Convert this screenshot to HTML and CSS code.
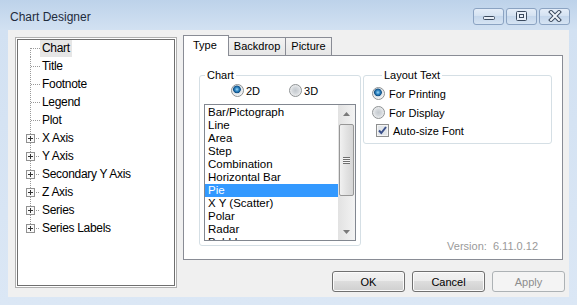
FILE: index.html
```html
<!DOCTYPE html>
<html lang="en">
<head>
    <meta charset="UTF-8">
    <title>Chart Designer</title>
    <link rel="stylesheet" href="styles.css">
</head>
<body>
<div class="window">
    <div class="titlebar">
        <span class="title">Chart Designer</span>
        <div class="caption-buttons">
            <span class="cap-btn">
                <svg width="14" height="12" viewBox="0 0 14 12"><rect x="1.5" y="6.5" width="11" height="3" rx="1" fill="#e8eff8" stroke="#3b4a5e"/></svg>
            </span>
            <span class="cap-btn">
                <svg width="14" height="12" viewBox="0 0 14 12"><rect x="1.5" y="1.5" width="10" height="9" rx="1" fill="#e8eff8" stroke="#3b4a5e"/><rect x="4.5" y="4.5" width="4" height="3" fill="none" stroke="#3b4a5e"/></svg>
            </span>
            <span class="cap-btn">
                <svg width="14" height="12" viewBox="0 0 14 12"><path d="M3 2 L11 10 M11 2 L3 10" stroke="#3b4a5e" stroke-width="4" stroke-linecap="square"/><path d="M3 2 L11 10 M11 2 L3 10" stroke="#eef3f9" stroke-width="2" stroke-linecap="square"/></svg>
            </span>
        </div>
    </div>

    <div class="client">
        <!-- Left: element tree -->
        <div class="tree">
            <div class="node first"><span class="gutter"><span class="tee"></span></span><span class="label selected">Chart</span></div>
            <div class="node"><span class="gutter"><span class="tee"></span></span><span class="label">Title</span></div>
            <div class="node"><span class="gutter"><span class="tee"></span></span><span class="label">Footnote</span></div>
            <div class="node"><span class="gutter"><span class="tee"></span></span><span class="label">Legend</span></div>
            <div class="node"><span class="gutter"><span class="tee"></span></span><span class="label">Plot</span></div>
            <div class="node"><span class="gutter"><svg class="plus" width="9" height="9" viewBox="0 0 9 9"><rect x="0.5" y="0.5" width="8" height="8" fill="#fafafa" stroke="#919191"/><path d="M2 4.5h5M4.5 2v5" stroke="#333"/></svg><span class="tee short"></span></span><span class="label">X Axis</span></div>
            <div class="node"><span class="gutter"><svg class="plus" width="9" height="9" viewBox="0 0 9 9"><rect x="0.5" y="0.5" width="8" height="8" fill="#fafafa" stroke="#919191"/><path d="M2 4.5h5M4.5 2v5" stroke="#333"/></svg><span class="tee short"></span></span><span class="label">Y Axis</span></div>
            <div class="node"><span class="gutter"><svg class="plus" width="9" height="9" viewBox="0 0 9 9"><rect x="0.5" y="0.5" width="8" height="8" fill="#fafafa" stroke="#919191"/><path d="M2 4.5h5M4.5 2v5" stroke="#333"/></svg><span class="tee short"></span></span><span class="label">Secondary Y Axis</span></div>
            <div class="node"><span class="gutter"><svg class="plus" width="9" height="9" viewBox="0 0 9 9"><rect x="0.5" y="0.5" width="8" height="8" fill="#fafafa" stroke="#919191"/><path d="M2 4.5h5M4.5 2v5" stroke="#333"/></svg><span class="tee short"></span></span><span class="label">Z Axis</span></div>
            <div class="node"><span class="gutter"><svg class="plus" width="9" height="9" viewBox="0 0 9 9"><rect x="0.5" y="0.5" width="8" height="8" fill="#fafafa" stroke="#919191"/><path d="M2 4.5h5M4.5 2v5" stroke="#333"/></svg><span class="tee short"></span></span><span class="label">Series</span></div>
            <div class="node last"><span class="gutter"><svg class="plus" width="9" height="9" viewBox="0 0 9 9"><rect x="0.5" y="0.5" width="8" height="8" fill="#fafafa" stroke="#919191"/><path d="M2 4.5h5M4.5 2v5" stroke="#333"/></svg><span class="tee short"></span></span><span class="label">Series Labels</span></div>
        </div>

        <!-- Right: property tabs -->
        <div class="main">
            <div class="tabs">
                <span class="tab active">Type</span>
                <span class="tab">Backdrop</span>
                <span class="tab">Picture</span>
            </div>
            <div class="panel">
                <fieldset class="group chart-group">
                    <legend>Chart</legend>
                    <div class="dims">
                        <span class="opt"><span class="radio on"></span>2D</span>
                        <span class="opt"><span class="radio"></span>3D</span>
                    </div>
                    <div class="listbox">
                        <ul class="items">
                            <li>Bar/Pictograph</li>
                            <li>Line</li>
                            <li>Area</li>
                            <li>Step</li>
                            <li>Combination</li>
                            <li>Horizontal Bar</li>
                            <li class="picked">Pie</li>
                            <li>X Y (Scatter)</li>
                            <li>Polar</li>
                            <li>Radar</li>
                            <li>Bubble</li>
                        </ul>
                        <div class="scrollbar">
                            <span class="arrow"><svg width="7" height="4" viewBox="0 0 7 4"><path d="M0 4L3.5 0L7 4Z" fill="#7a7a7a"/></svg></span>
                            <span class="track"><span class="thumb"><span class="grip"></span></span></span>
                            <span class="arrow"><svg width="7" height="4" viewBox="0 0 7 4"><path d="M0 0L3.5 4L7 0Z" fill="#7a7a7a"/></svg></span>
                        </div>
                    </div>
                </fieldset>

                <div class="side">
                    <fieldset class="group layout-group">
                        <legend>Layout Text</legend>
                        <div class="opt row"><span class="radio on"></span>For Printing</div>
                        <div class="opt row"><span class="radio"></span>For Display</div>
                        <div class="opt row check-row">
                            <svg class="check" width="13" height="13" viewBox="0 0 13 13"><rect x="0.5" y="0.5" width="12" height="12" fill="#f4f4f4" stroke="#8e8f8f"/><rect x="2" y="2" width="9" height="9" fill="#e2e6ea"/><path d="M3 6.5L5.3 9L10 3" fill="none" stroke="#3a4f8a" stroke-width="2"/></svg>Auto-size Font
                        </div>
                    </fieldset>
                    <div class="version">Version:&nbsp; 6.11.0.12</div>
                </div>
            </div>
            <div class="buttons">
                <span class="btn">OK</span>
                <span class="btn">Cancel</span>
                <span class="btn disabled">Apply</span>
            </div>
        </div>
    </div>
</div>
</body>
</html>
```

FILE: styles.css
```css
body {
    margin: 0;
    width: 577px;
    height: 305px;
    overflow: hidden;
    font-family: "Liberation Sans", Arial, sans-serif;
    background: linear-gradient(#bdd2ea, #d2e1f2 30px, #dbe7f5);
}

.window {
    display: flex;
    flex-direction: column;
    height: 305px;
}

/* Title bar */
.titlebar {
    height: 30px;
    display: flex;
    align-items: center;
    padding: 0 7px 0 10px;
    box-sizing: border-box;
}

.title {
    flex: 1;
    font-size: 12px;
    color: #1e2b3c;
    padding-top: 4px;
}

.caption-buttons {
    display: flex;
    gap: 2px;
    padding-top: 2px;
}

.cap-btn {
    width: 31px;
    height: 17px;
    box-sizing: border-box;
    display: flex;
    align-items: center;
    justify-content: center;
    border: 1px solid #8ba3c2;
    border-radius: 3px;
    background: linear-gradient(#e4edf8, #d3e1f1 50%, #c5d7ec 50%, #d6e4f3);
}

/* Client area */
.client {
    margin: 0 8px;
    height: 267px;
    box-sizing: border-box;
    display: flex;
    padding: 5px 0 0 7px;
    background-color: #f0f0f0;
}

/* Tree view */
.tree {
    width: 162px;
    height: 251px;
    margin-top: 2px;
    box-sizing: border-box;
    background: #fff;
    border: 1px solid #b0b0b0;
    box-shadow: inset 0 0 0 1px #fff, inset 0 0 0 2px #6f6f6f;
    font-size: 12px;
    letter-spacing: -0.3px;
}

.node {
    display: flex;
    align-items: center;
    height: 18px;
}

.node:first-child {
    margin-top: 1px;
}

.gutter {
    width: 24px;
    height: 18px;
    display: flex;
    align-items: center;
    background-image: repeating-linear-gradient(#9a9a9a 0 1px, transparent 1px 2px);
    background-size: 1px 18px;
    background-position: 14px 0;
    background-repeat: no-repeat;
}

.first .gutter {
    background-size: 1px 9px;
    background-position: 14px 100%;
}

.last .gutter {
    background-size: 1px 9px;
    background-position: 14px 0;
}

.tee {
    margin-left: 15px;
    width: 9px;
    height: 1px;
    background-image: repeating-linear-gradient(90deg, #9a9a9a 0 1px, transparent 1px 2px);
}

.plus {
    margin-left: 10px;
    display: block;
}

.tee.short {
    margin-left: 1px;
    width: 4px;
}

.label {
    padding: 0 2px;
    line-height: 17px;
    color: #000;
}

.label.selected {
    background: #e6e6e6;
}

/* Tabs */
.main {
    margin-left: 6px;
    width: 382px;
    display: flex;
    flex-direction: column;
}

.tabs {
    display: flex;
    align-items: flex-end;
    height: 20px;
    font-size: 11px;
}

.tab {
    height: 18px;
    line-height: 17px;
    box-sizing: border-box;
    padding: 0 5px;
    border: 1px solid #898c95;
    border-bottom: none;
    margin-left: -1px;
    background: linear-gradient(#f3f3f3, #e6e6e6);
}

.tab.active {
    position: relative;
    z-index: 1;
    height: 21px;
    margin-left: 0;
    margin-bottom: -1px;
    padding: 0 11px 0 9px;
    line-height: 19px;
    background: #fff;
}

.panel {
    width: 380px;
    height: 205px;
    box-sizing: border-box;
    display: flex;
    align-items: flex-start;
    gap: 2px;
    padding: 13px 0 0 15px;
    border: 1px solid #898c95;
    background: #fff;
}

/* Group boxes */
.group {
    margin: 0;
    padding: 0;
    box-sizing: border-box;
    border: 1px solid #d5dfe5;
    border-radius: 3px;
    font-size: 11px;
}

.group legend {
    padding: 0 2px;
    line-height: 13px;
}

.chart-group {
    width: 162px;
    height: 177px;
}

.chart-group legend {
    margin-left: 5px;
}

.dims {
    display: flex;
    gap: 29px;
    padding-left: 31px;
    margin-top: 2px;
}

.opt {
    display: flex;
    align-items: center;
    gap: 2px;
    height: 13px;
    font-size: 11px;
}

.radio {
    width: 13px;
    height: 13px;
    box-sizing: border-box;
    border-radius: 50%;
    border: 1px solid #8e9294;
    background: radial-gradient(circle at 50% 50%, #c4c9ce 0, #d4d8dc 3px, #eff0f1 6px);
}

.radio.on {
    background: radial-gradient(circle at 45% 40%, #9fd9f7 0, #2f86c4 2px, #0f4f84 3.5px, #dfe3e7 4.2px, #f2f3f4 6px);
}

/* List box */
.listbox {
    display: flex;
    width: 152px;
    height: 137px;
    margin: 7px 0 0 4px;
    box-sizing: border-box;
    border: 1px solid #828790;
    background: #fff;
}

.items {
    flex: 1;
    margin: 0;
    padding: 1px 0 0;
    list-style: none;
    overflow: hidden;
    font-size: 11.5px;
}

.items li {
    height: 13px;
    line-height: 13px;
    padding-left: 3px;
}

.items li.picked {
    background: #3399ff;
    color: #fff;
}

.scrollbar {
    width: 17px;
    display: flex;
    flex-direction: column;
    background: linear-gradient(90deg, #e2e2e2, #f3f3f3);
}

.arrow {
    height: 17px;
    display: flex;
    align-items: center;
    justify-content: center;
}

.track {
    flex: 1;
    padding: 2px 0 25px;
    display: flex;
}

.thumb {
    width: 15px;
    height: 72px;
    margin-left: 1px;
    box-sizing: border-box;
    display: flex;
    align-items: center;
    justify-content: center;
    border: 1px solid #979797;
    border-radius: 2px;
    background: linear-gradient(90deg, #f1f1f1, #e2e2e2 50%, #d6d6d6);
}

.grip {
    width: 7px;
    height: 7px;
    background: repeating-linear-gradient(#6f6f6f 0 1px, #f6f6f6 1px 2px);
}

/* Right side of the tab page */
.side {
    width: 189px;
    height: 177px;
    display: flex;
    flex-direction: column;
    justify-content: space-between;
}

.layout-group {
    height: 75px;
    padding: 2px 0 0 8px;
}

.layout-group legend {
    margin-left: 10px;
}

.row {
    height: 19px;
    gap: 4px;
}

.check-row {
    padding-left: 4px;
    height: 17px;
}

.check {
    display: block;
}

.version {
    align-self: flex-end;
    margin: 0 14px -7px 0;
    line-height: 13px;
    font-size: 11px;
    color: #9a9a9a;
}

/* Dialog buttons */
.buttons {
    display: flex;
    justify-content: flex-end;
    gap: 7px;
    margin-top: 11px;
}

.btn {
    width: 73px;
    height: 21px;
    box-sizing: border-box;
    display: flex;
    align-items: center;
    justify-content: center;
    font-size: 11px;
    border: 1px solid #707070;
    border-radius: 3px;
    box-shadow: inset 0 0 0 1px #fbfbfb;
    background: linear-gradient(#f2f2f2, #ebebeb 50%, #dddddd 50%, #cfcfcf);
}

.btn.disabled {
    color: #8d8d8d;
    border-color: #adb2b5;
    background: #f4f4f4;
    box-shadow: none;
}
```
